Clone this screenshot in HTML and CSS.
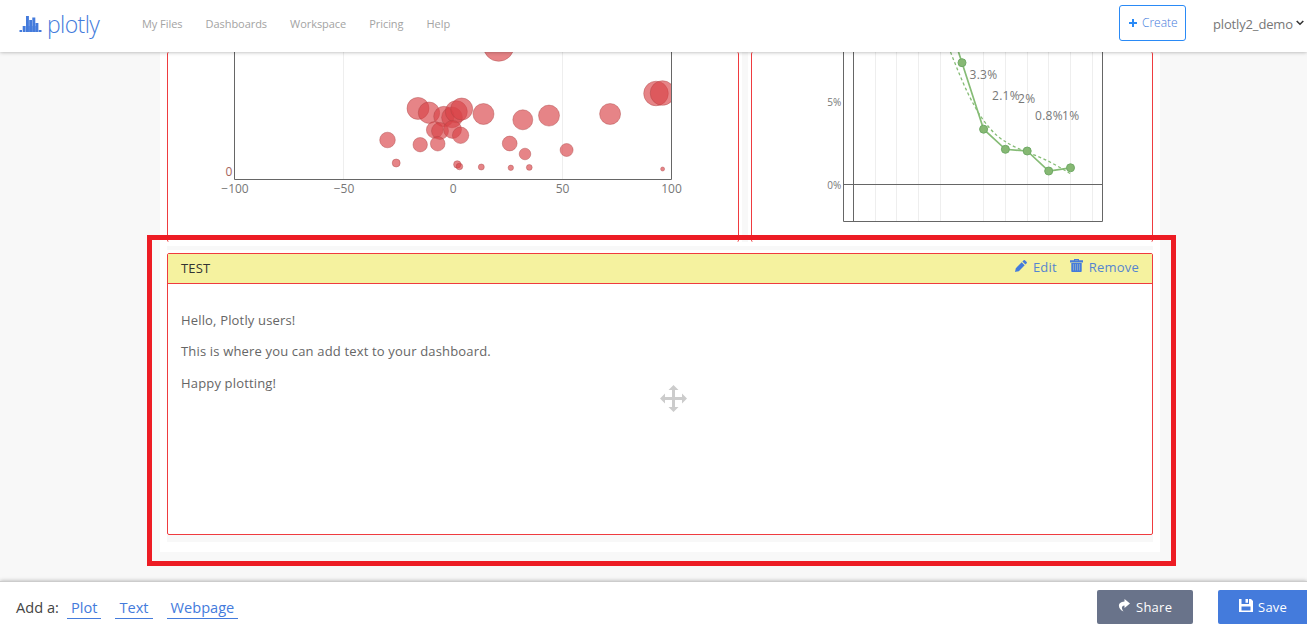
FILE: index.html
```html
<!DOCTYPE html>
<html lang="en">
<head>
<meta charset="utf-8">
<title>Plotly dashboard</title>
<link rel="stylesheet" href="styles.css">
</head>
<body>
<header class="topbar">
  <a class="logo">
    <svg class="logo-mark" width="23" height="16" viewBox="0 0 23 16" fill="#447bdc"><path d="M.5 14H3v2H.5zM3.700 10H6.500v6H3.700zM7 0h2.900v16H7zM10.200 4h2.800v12h-2.800zM13.300 1.500h3v14.500h-3zM16.600 7h2.800v9h-2.800zM19.800 14h2.700v2h-2.700z"/><path d="M6.500 10H17v6H6.500z" fill-opacity=".6"/></svg>
    <span class="logo-text">plotly</span>
  </a>
  <nav class="nav">
    <a>My Files</a><a>Dashboards</a><a>Workspace</a><a>Pricing</a><a>Help</a>
  </nav>
  <a class="create"><svg width="8" height="8" viewBox="0 0 8 8"><path d="M4 0v8M0 4h8" stroke="#2a8af6" stroke-width="2"/></svg>Create</a>
  <a class="user">plotly2_demo<svg width="8" height="6" viewBox="0 0 8 6"><path d="M.7 1 4 4.200 7.300 1" fill="none" stroke="#333" stroke-width="1.600"/></svg></a>
</header>

<main class="workspace">
  <div class="board">
    <div class="row">
      <section class="panel plot">
        <svg class="chart" width="570" height="188" viewBox="168 52 570 188">
          <path class="grid" d="M343.500 52V179M562.500 52V179"/>
          <clipPath id="plot-area"><path d="M235 40H671V180H235z"/></clipPath>
          <g class="bubbles" clip-path="url(#plot-area)">
            <circle cx="498.700" cy="46" r="15.300"/>
            <circle cx="418" cy="108.400" r="11"/><circle cx="429" cy="112.700" r="10.700"/>
            <circle cx="443.900" cy="116.500" r="10.200"/><circle cx="452" cy="117.400" r="10.400"/>
            <circle cx="456.300" cy="111.700" r="11"/><circle cx="461.700" cy="109" r="11"/>
            <circle cx="434.700" cy="129.900" r="8.300"/><circle cx="440" cy="131" r="8.500"/>
            <circle cx="452.500" cy="129.400" r="9"/><circle cx="460.600" cy="135.300" r="8.200"/>
            <circle cx="483.500" cy="114" r="10.500"/><circle cx="522.800" cy="119.800" r="10"/>
            <circle cx="549" cy="115.600" r="10.500"/><circle cx="610.100" cy="114" r="10.500"/>
            <circle cx="656" cy="93.500" r="12.300"/><circle cx="662.500" cy="93" r="12.300"/>
            <circle cx="387.500" cy="140" r="7.800"/><circle cx="420.200" cy="144.700" r="7.200"/>
            <circle cx="437.700" cy="143.700" r="7.300"/><circle cx="509.700" cy="143.500" r="7.400"/>
            <circle cx="525" cy="154" r="5.800"/><circle cx="566.600" cy="150" r="6.500"/>
            <circle cx="396.200" cy="163" r="4"/><circle cx="457.300" cy="164.400" r="3.700"/>
            <circle cx="459.400" cy="166.500" r="3.300"/><circle cx="481.300" cy="167" r="3"/>
            <circle cx="510.800" cy="167.800" r="2.700"/><circle cx="529.300" cy="167.400" r="2.900"/>
            <circle cx="662.600" cy="169" r="2"/>
          </g>
          <path class="axis" d="M234.500 52V179.500H671.500V52"/>
          <g class="ticks" text-anchor="middle">
            <text x="229" y="176" fill="#a5645c">0</text>
            <text x="235" y="193">−100</text><text x="344" y="193">−50</text>
            <text x="453.300" y="193">0</text><text x="562.500" y="193">50</text><text x="671.500" y="193">100</text>
          </g>
        </svg>
      </section>
      <section class="panel plot">
        <svg class="chart" width="400" height="188" viewBox="752 52 400 188">
          <path class="grid" d="M875.500 52V221M896.500 52V221M918.500 52V221M940.500 52V221M983.500 52V221M1005.500 52V221M1027.500 52V221M1048.500 52V221M1070.500 52V221M1092.500 52V221"/>
          <path class="axis" d="M843.500 52V221.500H1102.500V52M853.500 52V221M843 184.500H1102"/>
          <path class="trend" d="M950.500 52C958 71 966 91 974 105C983 122 995 136 1006 142C1018 150 1037 155 1050 162Q1061 168 1071 174"/>
          <path class="series" d="M958.500 52 962 62.700 983.600 129.200 1005.400 149.300 1027.200 151 1048.700 171 1070.500 167.800"/>
          <g class="points">
            <circle cx="962" cy="62.700" r="4"/><circle cx="983.600" cy="129.200" r="4"/>
            <circle cx="1005.400" cy="149.300" r="4"/><circle cx="1027.200" cy="151" r="4"/>
            <circle cx="1048.700" cy="171" r="4"/><circle cx="1070.500" cy="167.800" r="4"/>
          </g>
          <g class="ticks labels">
            <text x="969.500" y="79">3.3%</text><text x="992" y="100">2.1%</text>
            <text x="1018" y="103">2%</text><text x="1035" y="120">0.8%</text><text x="1062" y="120">1%</text>
          </g>
          <g class="ticks small" text-anchor="end">
            <text x="841.300" y="106">5%</text><text x="841.300" y="189">0%</text>
          </g>
        </svg>
      </section>
    </div>
    <div class="strip"></div>
    <section class="panel note">
      <div class="note-head">
        <h2>TEST</h2>
        <a class="action"><svg width="12" height="12" viewBox="0 0 12 12" fill="#447bdc"><path d="M0 12 .8 8.200 6.700 2.300 9.700 5.300 3.800 11.200zM7.400 1.600 8.700.3Q9.300-.2 9.900.3L11.700 2.100Q12.200 2.700 11.700 3.300L10.400 4.600z"/></svg>Edit</a>
        <a class="action remove"><svg width="13" height="13" viewBox="0 0 13 13"><path d="M1.300 4h10.400v8.200q0 .8-.8.8H2.100q-.8 0-.8-.8zM0 1.300h13v2.200H0zM4 0h5v1.500H8V.9H5v.6H4z" fill="#447bdc"/><path d="M3.500 5v6.500M5.500 5v6.500M7.500 5v6.500M9.500 5v6.500" stroke="#a9bfc0" stroke-width=".6"/></svg>Remove</a>
      </div>
      <div class="note-body">
        <p>Hello, Plotly users!</p>
        <p>This is where you can add text to your dashboard.</p>
        <p>Happy plotting!</p>
        <svg class="move" width="27" height="27" viewBox="0 0 27 27" fill="#ccc"><path d="M13.500 0 18.500 5H15V12H22V8.500L27 13.500 22 18.500V15H15V22H18.500L13.500 27 8.500 22H12V15H5V18.500L0 13.500 5 8.500V12H12V5H8.500z"/></svg>
      </div>
    </section>
    <div class="strip end"></div>
  </div>
  <div class="highlight"></div>
</main>

<footer class="bottombar">
  <span class="add">Add a:</span>
  <a class="link">Plot</a><a class="link">Text</a><a class="link">Webpage</a>
  <a class="btn share"><svg width="12" height="13" viewBox="0 0 12 13" fill="#fff"><path d="M6.500 0 12 4.500 6.500 9V6.500C3.500 6.500 3 9.500 5.500 12.500 0 10.500-1.500 3 6.500 2.500z"/></svg>Share</a>
  <a class="btn save"><svg width="14" height="13" viewBox="0 0 14 13" fill="#fff" fill-rule="evenodd"><path d="M0 0H2.500V5H10V0H12L14 2V13H0zM2.500 7.500V11.500H11.500V7.500zM6.500 0H9V3.800H6.500z"/></svg>Save</a>
</footer>
</body>
</html>
```
FILE: styles.css
```css
* { box-sizing: border-box; }
body {
  margin: 0;
  height: 631px;
  display: flex;
  flex-direction: column;
  overflow: hidden;
  background: #f8f8f8;
  font-family: "Open Sans", sans-serif;
  font-size: 13px;
  color: #666;
}
svg { display: block; flex: none; }

.topbar {
  height: 52px;
  flex: none;
  display: flex;
  align-items: flex-start;
  background: #fff;
  box-shadow: 0 0 4px rgba(0, 0, 0, .35);
  position: relative;
  z-index: 2;
  white-space: nowrap;
}
.logo { display: flex; width: 142px; padding-left: 19px; }
.logo-mark { margin-top: 16px; }
.logo-text {
  margin: 8px 0 0 5px;
  font-size: 23px;
  line-height: 32px;
  font-weight: 300;
  letter-spacing: -.6px;
  color: #447bdc;
}
.nav {
  display: flex;
  gap: 23px;
  padding-top: 16px;
  font-size: 11px;
  line-height: 16px;
  letter-spacing: -.05px;
  color: #a3a3a3;
}
.create {
  display: flex;
  align-items: center;
  gap: 5px;
  width: 67px;
  height: 36px;
  margin: 5px 27px 0 auto;
  padding-left: 9px;
  border: 1px solid #2a8af6;
  border-radius: 3px;
  font-size: 12px;
  line-height: 34px;
  font-weight: 300;
  color: #447bdc;
}
.user {
  display: flex;
  gap: 3px;
  width: 94px;
  padding-top: 15px;
  line-height: 18px;
  letter-spacing: -.15px;
  color: #777;
}
.user svg { margin-top: 5px; }

.workspace { flex: 1; position: relative; }
.board {
  width: 1000px;
  height: 500px;
  margin-left: 160px;
  padding: 0 7px;
  background: #fff;
}
.row { display: flex; justify-content: space-between; height: 190px; }
.row::before {
  content: "";
  order: 1;
  width: 6px;
  background: #f8f8f8;
}
.row .panel:last-child { order: 2; }
.panel { border: 1px solid #ef3b3f; border-radius: 2px; background: #fff; }
.plot { border-width: 0 1px; }
.strip { height: 4px; margin: 4px 0 3px; background: #f8f8f8; }
.strip.end { height: 7px; margin: 0; }
.note { height: 282px; }
.note-head {
  display: flex;
  height: 30px;
  padding: 0 13px;
  background: #f5f29f;
  border-bottom: 1px solid #ef3b3f;
  line-height: 28px;
}
.note-head h2 { margin: 0 auto 0 0; font-size: 13px; font-weight: 400; letter-spacing: .15px; color: #333; }
.action { display: flex; gap: 6px; color: #5585d0; letter-spacing: .2px; line-height: 27px; }
.action svg { margin-top: 6px; }
.remove { margin-left: 13px; }
.remove svg { margin-top: 5px; }
.note-body { position: relative; padding: 26px 13px; letter-spacing: .165px; }
.note-body p { margin: 0 0 11.400px; line-height: 20px; }
.move { position: absolute; left: 492px; top: 101px; }
.highlight {
  position: absolute;
  left: 147px;
  top: 183px;
  width: 1029px;
  height: 331px;
  border: 5px solid #ed1c24;
}

.chart { font-family: "Open Sans", sans-serif; }
.grid { stroke: #eee; fill: none; }
.axis { stroke: #666; fill: none; }
.bubbles { fill: #d94246; fill-opacity: .65; stroke: #a44; stroke-opacity: .4; stroke-width: 1; }
.ticks { font-size: 12px; fill: #777; }
.labels { letter-spacing: .3px; }
.small { font-size: 10px; }
.trend { fill: none; stroke: #86bc76; stroke-width: 1.300; stroke-dasharray: 3 2.500; }
.series { fill: none; stroke: #86bc76; stroke-width: 1.700; }
.points { fill: #86b873; stroke: #70aa67; }

.bottombar {
  height: 50px;
  flex: none;
  display: flex;
  align-items: flex-start;
  padding-left: 16px;
  background: #fff;
  border-top: 1px solid #ccc;
  box-shadow: 0 0 4px rgba(0, 0, 0, .3);
  position: relative;
  font-size: 14.600px;
  line-height: 22px;
  white-space: nowrap;
}
.add { width: 51px; padding-top: 14px; color: #444; }
.link { margin: 14px 14px 0 0; padding: 0 4px; border-bottom: 1px solid #447bdc; color: #447bdc; }
.btn {
  display: flex;
  height: 34px;
  margin-top: 8px;
  border-radius: 2px;
  font-size: 13px;
  line-height: 34px;
  letter-spacing: .25px;
  color: #fff;
}
.share { width: 96px; margin-left: auto; margin-right: 25px; padding-left: 21px; gap: 6px; background: #69738a; }
.share svg { margin-top: 9px; }
.save { width: 89px; padding-left: 21px; gap: 5px; background: #447bdc; border-radius: 2px 0 0 2px; }
.save svg { margin-top: 9px; }
```
